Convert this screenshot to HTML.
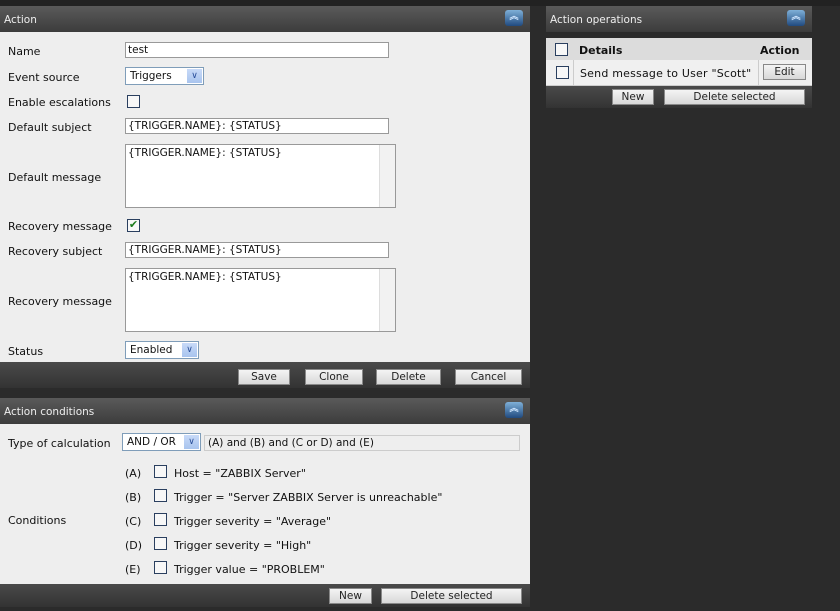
<!DOCTYPE html><html><head><style>
body{margin:0;width:840px;height:611px;background:#2b2b2b;position:relative;overflow:hidden;font-family:"DejaVu Sans","Liberation Sans",sans-serif;font-size:11px;color:#111}
div,span{position:absolute;box-sizing:border-box}
span{margin-top:1px}
.hd{background:linear-gradient(#5a5a5a,#3c3c3c);color:#eee;font-size:10.5px;padding:8px 4px;height:26px}
.bd{background:#eeeeee}
.ft{background:linear-gradient(#4a4a4a,#333);}
.lb{left:8px}
.in{background:#fff;border:1px solid #999;height:16px;padding:1px 2px;font-size:10.5px;white-space:nowrap}
.ta{background:#fff;border:1px solid #999;padding:2px 2px;font-size:10.5px}
.sb{right:0;top:0;bottom:0;width:16px;background:#f2f2f2;border-left:1px solid #ddd}
.btn{background:linear-gradient(#f4f4f4,#d8d8d8);border:1px solid #888;height:16px;text-align:center;font-size:10.5px;line-height:15px;color:#222}
.sel{background:#fff;border:1px solid #7f9db9;height:18px;padding:2px 4px;font-size:10.5px}
.arr{right:1px;top:1px;width:15px;height:14px;background:linear-gradient(#c8daf8,#a8c4ee);color:#2a4f9a;font-size:9px;text-align:center;line-height:14px}
.cb{width:13px;height:13px;border:1px solid #2a3f5f;background:#f7f7f7}
.col{width:18px;height:16px;border-radius:3px;background:linear-gradient(#7fb0d8,#204a80);color:#cfe6ff;font-size:9px;line-height:14px;text-align:center;font-weight:bold}
</style></head><body>
<div style="left:0;top:0;width:840px;height:6px;background:#222"></div>
<div class="hd" style="left:0;top:6px;width:530px">Action</div>
<div class="col" style="left:505px;top:10px">︽</div>
<div class="bd" style="left:0;top:32px;width:530px;height:330px"></div>
<span class="lb" style="top:44px">Name</span>
<div class="in" style="left:125px;top:42px;width:264px">test</div>
<span class="lb" style="top:70px">Event source</span>
<div class="sel" style="left:125px;top:67px;width:79px">Triggers<div class="arr">&#8744;</div></div>
<span class="lb" style="top:95px">Enable escalations</span>
<div class="cb" style="left:127px;top:95px"></div>
<span class="lb" style="top:120px">Default subject</span>
<div class="in" style="left:125px;top:118px;width:264px">{TRIGGER.NAME}: {STATUS}</div>
<span class="lb" style="top:170px">Default message</span>
<div class="ta" style="left:125px;top:144px;width:271px;height:64px">{TRIGGER.NAME}: {STATUS}<div class="sb"></div></div>
<span class="lb" style="top:219px">Recovery message</span>
<div class="cb" style="left:127px;top:219px;color:#1a7a1a;font-size:11px;line-height:10px;text-align:center">✔</div>
<span class="lb" style="top:244px">Recovery subject</span>
<div class="in" style="left:125px;top:242px;width:264px">{TRIGGER.NAME}: {STATUS}</div>
<span class="lb" style="top:294px">Recovery message</span>
<div class="ta" style="left:125px;top:268px;width:271px;height:64px">{TRIGGER.NAME}: {STATUS}<div class="sb"></div></div>
<span class="lb" style="top:344px">Status</span>
<div class="sel" style="left:125px;top:341px;width:74px">Enabled<div class="arr">&#8744;</div></div>
<div class="ft" style="left:0;top:362px;width:530px;height:26px"></div>
<div class="btn" style="left:238px;top:369px;width:52px">Save</div>
<div class="btn" style="left:305px;top:369px;width:58px">Clone</div>
<div class="btn" style="left:376px;top:369px;width:65px">Delete</div>
<div class="btn" style="left:455px;top:369px;width:67px">Cancel</div>
<div class="hd" style="left:0;top:398px;width:530px">Action conditions</div>
<div class="col" style="left:505px;top:402px">︽</div>
<div class="bd" style="left:0;top:424px;width:530px;height:160px"></div>
<span class="lb" style="top:436px">Type of calculation</span>
<div class="sel" style="left:122px;top:433px;width:79px">AND / OR<div class="arr">&#8744;</div></div>
<div style="left:204px;top:435px;width:316px;height:16px;border:1px solid #ccc;background:#eee;padding:1px 3px;font-size:10.5px">(A) and (B) and (C or D) and (E)</div>
<span class="lb" style="top:513px">Conditions</span>
<span style="left:125px;top:466px">(A)</span><div class="cb" style="left:154px;top:465px"></div><span style="left:174px;top:466px">Host = "ZABBIX Server"</span>
<span style="left:125px;top:490px">(B)</span><div class="cb" style="left:154px;top:489px"></div><span style="left:174px;top:490px">Trigger = "Server ZABBIX Server is unreachable"</span>
<span style="left:125px;top:514px">(C)</span><div class="cb" style="left:154px;top:513px"></div><span style="left:174px;top:514px">Trigger severity = "Average"</span>
<span style="left:125px;top:538px">(D)</span><div class="cb" style="left:154px;top:537px"></div><span style="left:174px;top:538px">Trigger severity = "High"</span>
<span style="left:125px;top:562px">(E)</span><div class="cb" style="left:154px;top:561px"></div><span style="left:174px;top:562px">Trigger value = "PROBLEM"</span>
<div class="ft" style="left:0;top:584px;width:530px;height:23px"></div>
<div class="btn" style="left:329px;top:588px;width:43px">New</div>
<div class="btn" style="left:381px;top:588px;width:141px">Delete selected</div>
<div class="hd" style="left:546px;top:6px;width:266px">Action operations</div>
<div class="col" style="left:787px;top:10px">︽</div>
<div style="left:546px;top:38px;width:266px;height:22px;background:#dcdcdc"></div>
<div class="cb" style="left:555px;top:43px"></div>
<span style="left:579px;top:43px;font-weight:bold">Details</span>
<span style="left:760px;top:43px;font-weight:bold">Action</span>
<div style="left:546px;top:60px;width:266px;height:26px;background:#f0f0f0;border-bottom:1px solid #ccc"></div>
<div style="left:573px;top:60px;width:1px;height:26px;background:#ccc"></div>
<div style="left:758px;top:60px;width:1px;height:26px;background:#ccc"></div>
<div class="cb" style="left:556px;top:66px"></div>
<span style="left:580px;top:66px;letter-spacing:0.2px">Send message to User "Scott"</span>
<div class="btn" style="left:763px;top:64px;width:43px">Edit</div>
<div class="ft" style="left:546px;top:86px;width:266px;height:22px"></div>
<div class="btn" style="left:612px;top:89px;width:42px">New</div>
<div class="btn" style="left:664px;top:89px;width:141px">Delete selected</div>
</body></html>
